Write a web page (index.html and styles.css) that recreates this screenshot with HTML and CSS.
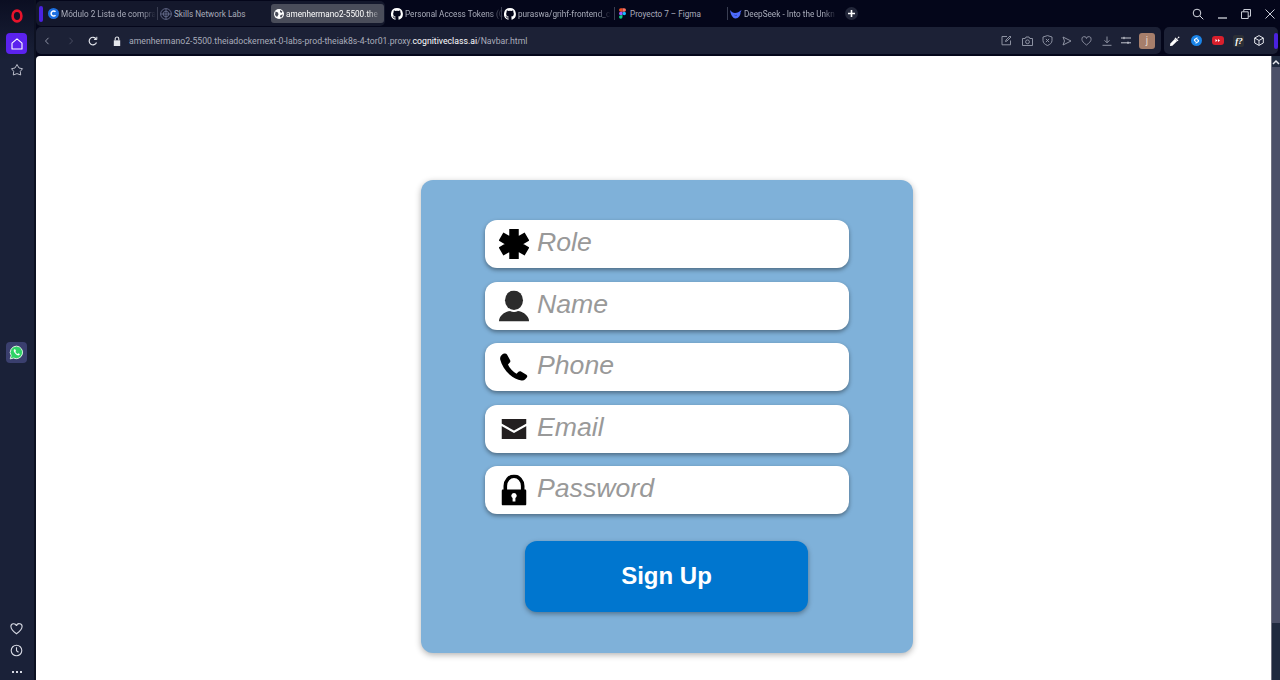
FILE: index.html
```html
<!DOCTYPE html>
<html lang="en">

<head>
  <meta charset="UTF-8">
  <meta name="viewport" content="width=device-width, initial-scale=1.0">
  <title>Sign Up</title>
  <link rel="stylesheet" href="styles.css">
</head>

<body>
  <div class="browser">
    <!-- opera sidebar -->
    <aside class="sidebar">
      <svg class="opera" width="12" height="14" viewBox="0 0 12 14"><ellipse cx="6" cy="7" rx="4.4" ry="5.4" fill="none" stroke="#e8132b" stroke-width="2.6"/></svg>
      <div class="side-btn home">
        <svg width="14" height="14" viewBox="0 0 14 14" fill="none" stroke="#fff" stroke-width="1.1"><path d="M2 6.2 7 1.8l5 4.4V12H2z" stroke-linejoin="round"/></svg>
      </div>
      <svg class="side-star" width="14" height="14" viewBox="0 0 14 14" fill="none" stroke="#c9ccd8" stroke-width=".9"><path d="M7 1.500 9 5l3.500.7-2.200 2.700.4 3.600L7 10.600 3.300 12l.4-3.600L1.500 5.700 5 5z" stroke-linejoin="round"/></svg>
      <div class="side-btn whatsapp">
        <svg width="15" height="15" viewBox="0 0 16 16"><path d="M8 1.200a6.700 6.700 0 0 0-5.700 10.200L1.300 14.800l3.500-.9A6.700 6.700 0 1 0 8 1.200z" fill="#2fd366" stroke="#e8f5ea" stroke-width="1"/><path d="M5.700 4.600c-.9.700-.9 2 .1 3.500s2.500 3 4 3c1 0 1.700-.6 1.700-1.400L10 8.800l-.9.800c-.8-.3-2-1.500-2.300-2.400l.7-.8-.9-1.800z" fill="#fff"/></svg>
      </div>
      <div class="side-bottom">
        <svg width="13" height="12" viewBox="0 0 13 12" fill="none" stroke="#d5d8e2" stroke-width="1.1"><path d="M6.500 10.800C3 8.200 1 6.400 1 4a2.700 2.700 0 0 1 5.500-1A2.700 2.700 0 0 1 12 4c0 2.400-2 4.200-5.500 6.800z"/></svg>
        <svg width="13" height="13" viewBox="0 0 13 13" fill="none" stroke="#d5d8e2" stroke-width="1.1"><circle cx="6.500" cy="6.500" r="5.300"/><path d="M6.500 3.200v3.500l2 1.500"/></svg>
        <div class="dots"><i></i><i></i><i></i></div>
      </div>
    </aside>

    <div class="main">
      <div class="tabbar">
        <div class="tab-group">
          <span class="group-mark"></span>
          <div class="tab first">
            <svg class="tab-icon" width="11" height="11" viewBox="0 0 11 11"><circle cx="5.500" cy="5.500" r="5.500" fill="#1d6fe0"/><path d="M7.500 3.800a2.500 2.500 0 1 0 0 3.400" fill="none" stroke="#fff" stroke-width="1.500"/></svg>
            <span class="tab-title">Módulo 2 Lista de compra</span>
          </div>
          <div class="tab sep">
            <svg class="tab-icon" width="12" height="12" viewBox="0 0 12 12" fill="none" stroke="#6d7396" stroke-width=".8"><circle cx="6" cy="6" r="5.400"/><circle cx="6" cy="6" r="2.800"/><path d="M6 .6v10.800M.6 6h10.800"/></svg>
            <span class="tab-title no-fade">Skills Network Labs</span>
          </div>
          <div class="tab active">
            <svg class="tab-icon" width="10" height="10" viewBox="0 0 10 10"><circle cx="5" cy="5" r="5" fill="#fff"/><path d="M1.500 2.500 4 3.500 4.500 5.500 3 8 1 6zM6 1l2.500 1.500L7.500 4 6 3zM6.500 6l2.500-.500L7.500 8.500 6 8z" fill="#4a4d5a"/></svg>
            <span class="tab-title">amenhermano2-5500.the</span>
          </div>
        </div>
        <div class="tab">
          <svg class="tab-icon" width="12" height="12" viewBox="0 0 16 16"><path fill="#fff" d="M8 0a8 8 0 0 0-2.500 15.600c.4.100.5-.2.500-.4v-1.400c-2.200.5-2.700-1-2.700-1-.4-.9-.9-1.200-.9-1.200-.7-.5.100-.5.100-.5.800.1 1.200.8 1.200.8.700 1.200 1.900.9 2.300.7.100-.5.300-.9.500-1.100-1.800-.2-3.600-.9-3.600-4 0-.9.300-1.600.8-2.100-.1-.2-.4-1 .1-2.100 0 0 .7-.2 2.200.8a7.500 7.500 0 0 1 4 0c1.500-1 2.200-.8 2.200-.8.500 1.100.2 1.900.1 2.100.5.600.8 1.300.8 2.100 0 3.100-1.900 3.700-3.700 3.900.3.300.6.800.6 1.500v2.200c0 .2.100.5.600.4A8 8 0 0 0 8 0z"/></svg>
          <span class="tab-title">Personal Access Tokens (C</span>
        </div>
        <div class="tab sep">
          <svg class="tab-icon" width="12" height="12" viewBox="0 0 16 16"><path fill="#fff" d="M8 0a8 8 0 0 0-2.500 15.600c.4.100.5-.2.500-.4v-1.400c-2.200.5-2.700-1-2.700-1-.4-.9-.9-1.200-.9-1.200-.7-.5.100-.5.100-.5.800.1 1.200.8 1.200.8.700 1.200 1.900.9 2.300.7.100-.5.300-.9.500-1.100-1.800-.2-3.600-.9-3.600-4 0-.9.300-1.600.8-2.100-.1-.2-.4-1 .1-2.100 0 0 .7-.2 2.200.8a7.500 7.500 0 0 1 4 0c1.500-1 2.200-.8 2.200-.8.500 1.100.2 1.900.1 2.100.5.600.8 1.300.8 2.100 0 3.100-1.900 3.700-3.700 3.900.3.300.6.800.6 1.500v2.200c0 .2.100.5.600.4A8 8 0 0 0 8 0z"/></svg>
          <span class="tab-title">puraswa/grihf-frontend_c</span>
        </div>
        <div class="tab sep figma">
          <svg class="tab-icon" width="7" height="11" viewBox="0 0 8 12"><path fill="#f24e1e" d="M0 2a2 2 0 0 1 2-2h2v4H2a2 2 0 0 1-2-2z"/><path fill="#ff7262" d="M4 0h2a2 2 0 1 1 0 4H4z"/><path fill="#a259ff" d="M0 6a2 2 0 0 1 2-2h2v4H2a2 2 0 0 1-2-2z"/><circle fill="#1abcfe" cx="6" cy="6" r="2"/><path fill="#0acf83" d="M0 10a2 2 0 0 1 2-2h2v2a2 2 0 1 1-4 0z"/></svg>
          <span class="tab-title no-fade">Proyecto 7 – Figma</span>
        </div>
        <div class="tab sep">
          <svg class="tab-icon" width="12" height="10" viewBox="0 0 12 10"><path fill="#4d6bfe" d="M0 1c1.500 2 3 3 5 3 2.500 0 4-1 6.500-3-.3 1-.5 1.500-1 2.300C10.800 6.500 8.500 9.500 5.500 9.500 2.500 9.500.5 5 0 1z"/><path fill="#0a0d24" d="M4 5.500c1 .8 2 .8 3 .2-.5 1.200-2.300 1.200-3-.2z"/></svg>
          <span class="tab-title">DeepSeek - Into the Unkn</span>
        </div>
        <div class="new-tab">
          <svg width="7" height="7" viewBox="0 0 7 7" stroke="#fff" stroke-width="1.600"><path d="M3.500 0v7M0 3.500h7"/></svg>
        </div>
        <div class="window-controls">
          <svg width="12" height="12" viewBox="0 0 12 12" fill="none" stroke="#d8dae2" stroke-width="1"><circle cx="5" cy="5" r="3.800"/><path d="m7.800 7.800 3.500 3.500"/></svg>
          <svg width="9" height="10" viewBox="0 0 9 10" stroke="#e2e4ea" stroke-width="1.200"><path d="M0 9h9"/></svg>
          <svg width="10" height="10" viewBox="0 0 10 10" fill="none" stroke="#c9ccd6" stroke-width="1"><path d="M.5 2.800h6.700v6.700H.5zM2.800 2.800V.5h6.700v6.700H7.200"/></svg>
          <svg width="10" height="10" viewBox="0 0 10 10" stroke="#c9ccd6" stroke-width="1"><path d="m.5.5 9 9M9.500.5l-9 9"/></svg>
        </div>
      </div>

      <div class="toolbar">
        <div class="address-bar">
          <svg class="nav-back" width="6" height="8" viewBox="0 0 6 8" fill="none" stroke="#8f93a5" stroke-width="1"><path d="M4.500.8 1.500 4l3 3.200"/></svg>
          <svg class="nav-fwd" width="6" height="8" viewBox="0 0 6 8" fill="none" stroke="#484c60" stroke-width="1"><path d="M1.500.8l3 3.200-3 3.200"/></svg>
          <svg class="nav-reload" width="10" height="10" viewBox="0 0 10 10" fill="none" stroke="#e4e6ec" stroke-width="1.200"><path d="M8.500 6.500a3.800 3.800 0 1 1-.4-3.600"/><path d="M8.800.8v2.700H6.100" stroke-width="1"/></svg>
          <svg class="nav-lock" width="8" height="10" viewBox="0 0 8 10"><path fill="#e4e6ec" d="M.8 4.300h6.400V10H.8z"/><path fill="none" stroke="#e4e6ec" stroke-width="1.100" d="M2.200 4.300V2.800a1.800 1.800 0 0 1 3.600 0v1.500"/></svg>
          <span class="url">amenhermano2-5500.theiadockernext-0-labs-prod-theiak8s-4-tor01.proxy.<b>cognitiveclass.ai</b>/Navbar.html</span>
          <div class="bar-icons">
            <svg width="11" height="11" viewBox="0 0 11 11" fill="none" stroke="#9a9eae" stroke-width=".9"><path d="M9.500 5.500v4.300H1V1.500h5M4.500 6.500 5 5l4-4 1 1-4 4z"/></svg>
            <svg width="11" height="10" viewBox="0 0 11 10" fill="none" stroke="#9a9eae" stroke-width=".9"><path d="M.5 2.500h2.700L4 1h3l.8 1.500h2.700v7H.5z"/><circle cx="5.500" cy="5.800" r="1.900"/></svg>
            <svg width="11" height="11" viewBox="0 0 11 11" fill="none" stroke="#9a9eae" stroke-width=".9"><path d="M5.500.6 10 2v3.500c0 2.500-2 4-4.500 5C3 9.500 1 8 1 5.500V2z"/><path d="m3.900 3.900 3.200 3.200M7.100 3.900 3.900 7.100"/></svg>
            <svg width="10" height="10" viewBox="0 0 10 10" fill="none" stroke="#9a9eae" stroke-width=".9"><path d="M1 1l8 4-8 4 1.500-4z" stroke-linejoin="round"/></svg>
            <svg width="11" height="10" viewBox="0 0 13 12" fill="none" stroke="#9a9eae" stroke-width="1"><path d="M6.500 10.800C3 8.200 1 6.400 1 4a2.700 2.700 0 0 1 5.500-1A2.700 2.700 0 0 1 12 4c0 2.400-2 4.200-5.500 6.800z"/></svg>
            <svg width="10" height="10" viewBox="0 0 10 10" fill="none" stroke="#9a9eae" stroke-width=".9"><path d="M5 .5v6M2.500 4.300 5 6.800l2.500-2.500M.5 9.300h9"/></svg>
            <svg width="10" height="9" viewBox="0 0 10 9" fill="none" stroke="#d8dae2" stroke-width=".9"><path d="M0 2h10M0 6.800h10M3 .8v2.400M7 5.600V8"/></svg>
          </div>
          <span class="avatar">j</span>
        </div>
        <div class="ext-bar">
          <svg width="12" height="12" viewBox="0 0 12 12"><path fill="#fff" d="M1 11l.3-2.400L6 3.800 8.200 6 3.400 10.700z"/><path fill="#fff" d="M6.500 2.500 8 4l1.500-2.500a1 1 0 0 1 1 1L8 4l1.500 1.500-1 .8-3-3z"/></svg>
          <svg width="11" height="11" viewBox="0 0 11 11"><circle cx="5.500" cy="5.500" r="5.500" fill="#1a84e8"/><path d="M6.500 2.800 4 4.300c-.8.500-.8 1.300 0 1.700l1.200.6M4.500 8.200 7 6.700c.8-.5.8-1.300 0-1.700l-1.200-.6" fill="none" stroke="#fff" stroke-width="1.100"/></svg>
          <svg width="12" height="9" viewBox="0 0 12 9"><rect width="12" height="9" rx="3" fill="#d81f2c"/><path d="M3.500 3v3l2-1.500zM6 3v3l2-1.500z" fill="#fff"/></svg>
          <span class="ext-ft">f?</span>
          <svg width="10" height="11" viewBox="0 0 10 11" fill="none" stroke="#e4e6ec" stroke-width="1"><path d="M5 .6l4.300 2.400v5L5 10.400.7 8V3zM.7 3 5 5.500 9.300 3M5 5.500v4.900"/></svg>
          <span class="ext-mark"></span>
        </div>
      </div>

      <div class="viewport">
        <main class="page">
          <form class="signup-card">
            <label class="field">
              <svg class="field-icon" width="30" height="30" viewBox="0 0 30 30"><path d="M15 0v30M2 7.500l26 15M28 7.500 2 22.500" stroke="#000" stroke-width="9.500"/></svg>
              <input type="text" placeholder="Role">
            </label>
            <label class="field">
              <svg class="field-icon" width="32" height="31" viewBox="0 0 32 31"><ellipse cx="16" cy="9.800" rx="9" ry="9.800" fill="#2b2b2b"/><path fill="#2b2b2b" d="M1 31c0-1 0-2 .5-3C3 24 8 20.800 12 20.500c2.500 1.200 5.500 1.200 8 0 4 .3 9 3.500 10.500 7.500.5 1 .5 2 .5 3z"/></svg>
              <input type="text" placeholder="Name">
            </label>
            <label class="field">
              <svg class="field-icon" width="28" height="28" viewBox="0 0 28 28"><path fill="#000" d="M5 .5C4 .2 3.200.5 2.500 1.200L1 2.800C.2 3.800 0 5 .2 6.500 1.500 12 5 17.500 9.500 21.500c3.500 3.300 8 5.500 12 6 1.500.2 2.700-.2 3.500-1l1.800-2c.8-.9.6-2-.4-2.700L21 18.500c-.8-.5-1.800-.4-2.500.3l-2 2c-3.500-1.800-7-5.800-8.500-9.300l1.800-2c.7-.8.700-1.700.2-2.500l-3-5.500C6.600.9 5.900.6 5 .5z"/></svg>
              <input type="tel" placeholder="Phone">
            </label>
            <label class="field">
              <svg class="field-icon" width="25" height="20" viewBox="0 0 25 20"><path fill="#231f20" d="M0 0h25v4.500L12.500 11.500 0 4.500zM0 7l12.500 7L25 7v13H0z"/></svg>
              <input type="email" placeholder="Email">
            </label>
            <label class="field">
              <svg class="field-icon" width="25" height="31" viewBox="0 0 25 31"><path fill="none" stroke="#000" stroke-width="3.600" d="M3.800 16V11.500a8.700 9.700 0 0 1 17.400 0V16"/><path fill="#000" fill-rule="evenodd" d="M1.500 15h22c.8 0 1.500.7 1.500 1.500v13c0 .8-.7 1.500-1.500 1.500h-22C.7 31 0 30.300 0 29.500v-13c0-.8.700-1.500 1.500-1.500zM12.500 18.500a2.700 2.700 0 0 0-1.400 5V27h2.800v-3.500a2.700 2.700 0 0 0-1.400-5z"/></svg>
              <input type="password" placeholder="Password">
            </label>
            <button class="signup-btn" type="button">Sign Up</button>
          </form>
        </main>
        <div class="scrollbar">
          <svg width="8" height="6" viewBox="0 0 8 6" fill="none" stroke="#e4e6ec" stroke-width="1.500"><path d="M1 5l3-3 3 3"/></svg>
          <div class="scroll-thumb"></div>
        </div>
      </div>
    </div>
  </div>
</body>

</html>
```

FILE: styles.css
```css
* {
  margin: 0;
  padding: 0;
  box-sizing: border-box;
}

body {
  width: 1280px;
  height: 680px;
  overflow: hidden;
  background-color: #04061a;
  font-family: Roboto, "Liberation Sans", sans-serif;
}

.browser {
  display: flex;
  height: 680px;
}

/* sidebar */
.sidebar {
  width: 36px;
  flex-shrink: 0;
  display: flex;
  flex-direction: column;
  align-items: center;
  padding-right: 1px;
  background: linear-gradient(#0b0e22, #1a2138 60px);
  border-right: 2px solid #0d1122;
}

.opera {
  margin-top: 9px;
}

.side-btn {
  width: 21px;
  height: 21px;
  border-radius: 4px;
  display: flex;
  align-items: center;
  justify-content: center;
}

.home {
  margin-top: 10px;
  background-color: #5b22ee;
}

.side-star {
  margin-top: 9px;
}

.whatsapp {
  margin-top: 265px;
  background-color: #3a3f6e;
}

.side-bottom {
  margin-top: auto;
  display: flex;
  flex-direction: column;
  align-items: center;
  gap: 9px;
  padding-bottom: 7px;
}

.dots {
  display: flex;
  gap: 2px;
  margin-top: 5px;
}

.dots i {
  width: 2px;
  height: 2px;
  background-color: #d5d8e2;
}

/* tabs */
.main {
  flex: 1;
  min-width: 0;
  display: flex;
  flex-direction: column;
}

.tabbar {
  height: 27px;
  flex-shrink: 0;
  display: flex;
  align-items: center;
}

.tab-group {
  display: flex;
  align-items: center;
  width: 349px;
  height: 25px;
  padding-left: 3px;
  background-color: #14182c;
  border-radius: 5px;
}

.group-mark {
  width: 4px;
  height: 16px;
  margin-right: 2px;
  background-color: #4a22e0;
  border-radius: 2px;
}

.tab {
  width: 113px;
  height: 19px;
  flex-shrink: 0;
  display: flex;
  align-items: center;
  gap: 2px;
  padding-left: 3px;
  padding-right: 3px;
  border-radius: 3px;
  font-size: 8.2px;
  color: #a9acba;
  white-space: nowrap;
}

.tab.first {
  width: 112px;
}

.tab.sep {
  position: relative;
}

.tab.sep::before {
  content: "";
  position: absolute;
  left: 0;
  top: 3px;
  width: 1px;
  height: 13px;
  background-color: #3a3e52;
}

.tab-group + .tab {
  margin-left: 3px;
}

.tab.figma {
  gap: 4px;
  padding-left: 5px;
}

.tab-icon {
  flex-shrink: 0;
}

.tab-title {
  flex: 1;
  -webkit-mask-image: linear-gradient(to right, #000 85%, transparent);
  mask-image: linear-gradient(to right, #000 85%, transparent);
}

.tab-title.no-fade {
  -webkit-mask-image: none;
  mask-image: none;
}

.tab.active {
  margin-left: 1px;
  background-color: #4a4d5a;
  color: #fff;
}

.new-tab {
  width: 13px;
  height: 13px;
  margin-left: 5px;
  border-radius: 50%;
  background-color: #23273a;
  display: flex;
  align-items: center;
  justify-content: center;
}

.window-controls {
  margin-left: auto;
  display: flex;
  align-items: center;
  width: 88px;
  justify-content: space-between;
  padding-right: 5px;
}

/* toolbar */
.toolbar {
  height: 27px;
  flex-shrink: 0;
  display: flex;
  gap: 3px;
  padding-right: 2px;
}

.address-bar {
  width: 1125px;
  display: flex;
  align-items: center;
  background-color: #1c2136;
  border-radius: 5px;
  padding-left: 8px;
}

.nav-fwd {
  margin-left: 18px;
}

.nav-reload {
  margin-left: 14px;
}

.nav-lock {
  margin-left: 15px;
}

.url {
  margin-left: 8px;
  font-size: 8.7px;
  color: #a9acba;
  white-space: nowrap;
}

.url b {
  font-weight: 400;
  color: #fff;
}

.bar-icons {
  margin-left: auto;
  display: flex;
  align-items: center;
  gap: 9.3px;
}

.avatar {
  width: 16px;
  height: 16px;
  margin: 0 6px 0 8px;
  background-color: #a67e6b;
  border-radius: 3px;
  text-align: center;
  font-size: 10px;
  line-height: 16px;
  color: #e6d8cf;
}

.ext-bar {
  flex: 1;
  display: flex;
  align-items: center;
  justify-content: space-between;
  padding: 0 0 0 5px;
  background-color: #1c2136;
  border-radius: 5px;
}

.ext-ft {
  width: 11px;
  height: 12px;
  font-family: "Liberation Serif", serif;
  font-style: italic;
  font-weight: 700;
  font-size: 9px;
  line-height: 12px;
  text-align: center;
  color: #fff;
  background-color: #2c2f36;
  border-radius: 2px;
}

.ext-mark {
  width: 4px;
  height: 16px;
  background-color: #4a22e0;
  border-radius: 2px;
}

/* page */
.viewport {
  flex: 1;
  min-height: 0;
  margin-top: 2px;
  display: flex;
}

.page {
  flex: 1;
  background-color: #fff;
  padding: 124px 0 0 385px;
  border-top-left-radius: 4px;
}

.signup-card {
  width: 492px;
  height: 473px;
  padding: 40px 64px 0;
  background-color: #7fb1d9;
  border-radius: 12px;
  box-shadow: 0 2px 6px rgba(0, 0, 0, 0.3);
  display: flex;
  flex-direction: column;
  gap: 13.5px;
}

.field {
  height: 48px;
  flex-shrink: 0;
  display: flex;
  align-items: center;
  background-color: #fff;
  border-radius: 12px;
  box-shadow: 0 2px 4px rgba(0, 0, 0, 0.4);
  position: relative;
}

.field-icon {
  position: absolute;
  left: 29px;
  top: 50%;
  transform: translate(-50%, -50%);
}

.field input {
  width: 100%;
  height: 100%;
  padding: 0 12px 3px 52px;
  border: none;
  outline: none;
  background: transparent;
  font-family: "Liberation Sans", Arial, sans-serif;
  font-size: 26.67px;
}

.field input::placeholder {
  font-style: italic;
  color: #999;
}

.signup-btn {
  width: 283px;
  height: 71px;
  flex-shrink: 0;
  margin: 13.5px 0 0 40px;
  padding-bottom: 2px;
  border: none;
  border-radius: 12px;
  background-color: #0076cf;
  color: #fff;
  font-family: "Liberation Sans", Arial, sans-serif;
  font-size: 24px;
  font-weight: 700;
  box-shadow: 0 2px 5px rgba(0, 0, 0, 0.35);
}

/* scrollbar */
.scrollbar {
  width: 9px;
  flex-shrink: 0;
  display: flex;
  flex-direction: column;
  align-items: center;
  padding-top: 3px;
  background-color: #1f2a3f;
  border-left: 1px solid #6f7280;
}

.scroll-thumb {
  width: 100%;
  height: 556px;
  margin-top: 2px;
  background-color: #4b5068;
}
```
